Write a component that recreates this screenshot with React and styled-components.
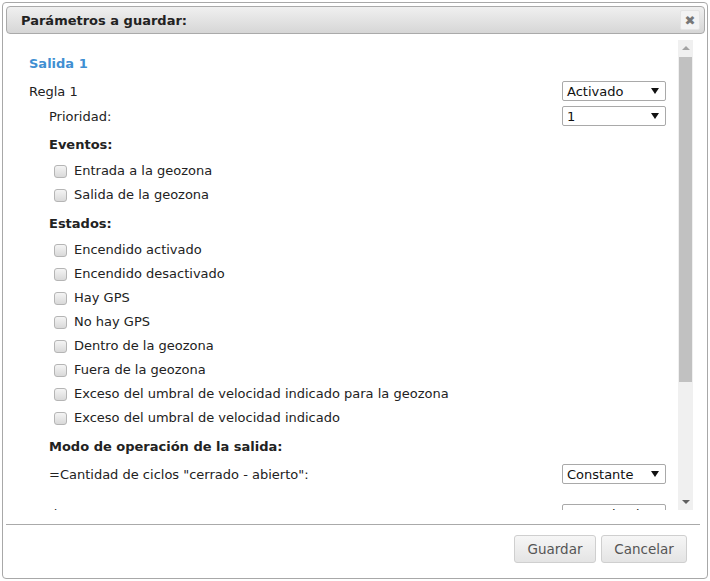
import React from "react";
import styled, { createGlobalStyle } from "styled-components";

const Global = createGlobalStyle`
  html, body { margin: 0; padding: 0; background: #fff; }
  body { font-family: "DejaVu Sans", Verdana, sans-serif; font-size: 13px; color: #222; }
  * { box-sizing: border-box; }
`;

const Page = styled.div`
  width: 710px;
  height: 581px;
  padding: 2px;
  background: #fff;
`;

const Dialog = styled.div`
  width: 706px;
  height: 577px;
  border: 1px solid #a8a8a8;
  border-radius: 4px;
  padding: 3px 2px 0 3px;
  display: flex;
  flex-direction: column;
  background: #fff;
`;

const Header = styled.div`
  height: 28px;
  flex: none;
  border: 1px solid #aaa;
  border-radius: 4px;
  background: linear-gradient(#f0f0f0, #d6d6d6);
  display: flex;
  align-items: center;
  justify-content: space-between;
  padding: 0 4px 0 14px;
`;

const Title = styled.div`
  font-weight: bold;
  font-size: 13px;
  color: #222;
  padding-top: 1px;
`;

const Close = styled.div`
  width: 20px;
  height: 20px;
  border-radius: 2px;
  background: #f3f3f3;
  border: 1px solid #e4e4e4;
  display: flex;
  align-items: center;
  justify-content: center;
  color: #777;
  font-size: 13px;
  font-weight: bold;
`;

const Body = styled.div`
  margin-top: 6px;
  height: 470px;
  flex: none;
  display: flex;
  padding-right: 12px;
`;

const Content = styled.div`
  flex: 1;
  overflow: hidden;
  padding: 16px 12px 0 23px;
`;

const Scrollbar = styled.div`
  width: 15px;
  flex: none;
  background: #f0f0f0;
  display: flex;
  flex-direction: column;
`;

const Arrow = styled.div`
  height: 16px;
  flex: none;
  display: flex;
  align-items: center;
  justify-content: center;
  &::after {
    content: "";
    border-left: 4px solid transparent;
    border-right: 4px solid transparent;
    ${(p) =>
      p.$down
        ? `border-top: 4px solid #606060;`
        : `border-bottom: 4px solid #a3a3a3;`}
  }
`;

const Thumb = styled.div`
  height: 325px;
  margin: 1px 1px 0 1px;
  background: #c1c1c1;
  flex: none;
`;

const Track = styled.div`
  flex: 1;
`;

const SectionTitle = styled.div`
  color: #3f8fd2;
  font-weight: bold;
  line-height: 16px;
`;

const Row = styled.div`
  display: flex;
  align-items: center;
  justify-content: space-between;
  height: 20px;
  margin-top: ${(p) => p.$mt || 0}px;
  padding-left: ${(p) => p.$indent || 0}px;
`;

const Label = styled.span`
  line-height: 16px;
  padding-top: 1px;
`;

const CheckText = styled.span`
  line-height: 16px;
`;

const Heading = styled.div`
  font-weight: bold;
  line-height: 16px;
  padding-left: 20px;
  margin-top: ${(p) => p.$mt || 0}px;
`;

const SelectBox = styled.div`
  width: 104px;
  height: 20px;
  border: 1px solid #a9a9a9;
  border-radius: 2px;
  background: #fff;
  display: flex;
  align-items: center;
  justify-content: space-between;
  padding: 0 6px 0 4px;
  font-size: 13px;
  color: #111;
  &::after {
    content: "";
    border-left: 4px solid transparent;
    border-right: 4px solid transparent;
    border-top: 6px solid #111;
  }
`;

const CheckList = styled.div`
  margin-top: 6px;
  padding-left: 25px;
`;

const CheckRow = styled.label`
  display: flex;
  align-items: center;
  height: 24px;
  gap: 7px;
`;

const Box = styled.span`
  width: 13px;
  height: 13px;
  border: 1px solid #b5b5b5;
  border-radius: 3px;
  background: linear-gradient(#f4f4f4, #d9d9d9);
  flex: none;
`;

const Footer = styled.div`
  margin-top: 14px;
  margin-right: 5px;
  border-top: 1px solid #aaa;
  display: flex;
  justify-content: flex-end;
  gap: 5px;
  padding: 10px 13px 0 0;
`;

const Button = styled.div`
  height: 28px;
  width: ${(p) => p.$w}px;
  border: 1px solid #cfcfcf;
  border-radius: 3px;
  background: linear-gradient(#f6f6f6, #e4e4e4);
  color: #555;
  display: flex;
  align-items: center;
  justify-content: center;
  font-size: 13.5px;
`;

const eventos = ["Entrada a la geozona", "Salida de la geozona"];
const estados = [
  "Encendido activado",
  "Encendido desactivado",
  "Hay GPS",
  "No hay GPS",
  "Dentro de la geozona",
  "Fuera de la geozona",
  "Exceso del umbral de velocidad indicado para la geozona",
  "Exceso del umbral de velocidad indicado",
];

export default function App() {
  return (
    <Page>
      <Global />
      <Dialog>
        <Header>
          <Title>Parámetros a guardar:</Title>
          <Close>✖</Close>
        </Header>
        <Body>
          <Content>
            <SectionTitle>Salida 1</SectionTitle>
            <Row $mt={9}>
              <Label>Regla 1</Label>
              <SelectBox>Activado</SelectBox>
            </Row>
            <Row $mt={5} $indent={20}>
              <Label>Prioridad:</Label>
              <SelectBox>1</SelectBox>
            </Row>
            <Heading $mt={11}>Eventos:</Heading>
            <CheckList>
              {eventos.map((t) => (
                <CheckRow key={t}>
                  <Box />
                  <CheckText>{t}</CheckText>
                </CheckRow>
              ))}
            </CheckList>
            <Heading $mt={9}>Estados:</Heading>
            <CheckList>
              {estados.map((t) => (
                <CheckRow key={t}>
                  <Box />
                  <CheckText>{t}</CheckText>
                </CheckRow>
              ))}
            </CheckList>
            <Heading $mt={9}>Modo de operación de la salida:</Heading>
            <Row $mt={9} $indent={20}>
              <Label>=Cantidad de ciclos "cerrado - abierto":</Label>
              <SelectBox>Constante</SelectBox>
            </Row>
            <Row $mt={20}>
              <Label>Regla 2</Label>
              <SelectBox>Desactivado</SelectBox>
            </Row>
          </Content>
          <Scrollbar>
            <Arrow />
            <Thumb />
            <Track />
            <Arrow $down />
          </Scrollbar>
        </Body>
        <Footer>
          <Button $w={82}>Guardar</Button>
          <Button $w={86}>Cancelar</Button>
        </Footer>
      </Dialog>
    </Page>
  );
}
